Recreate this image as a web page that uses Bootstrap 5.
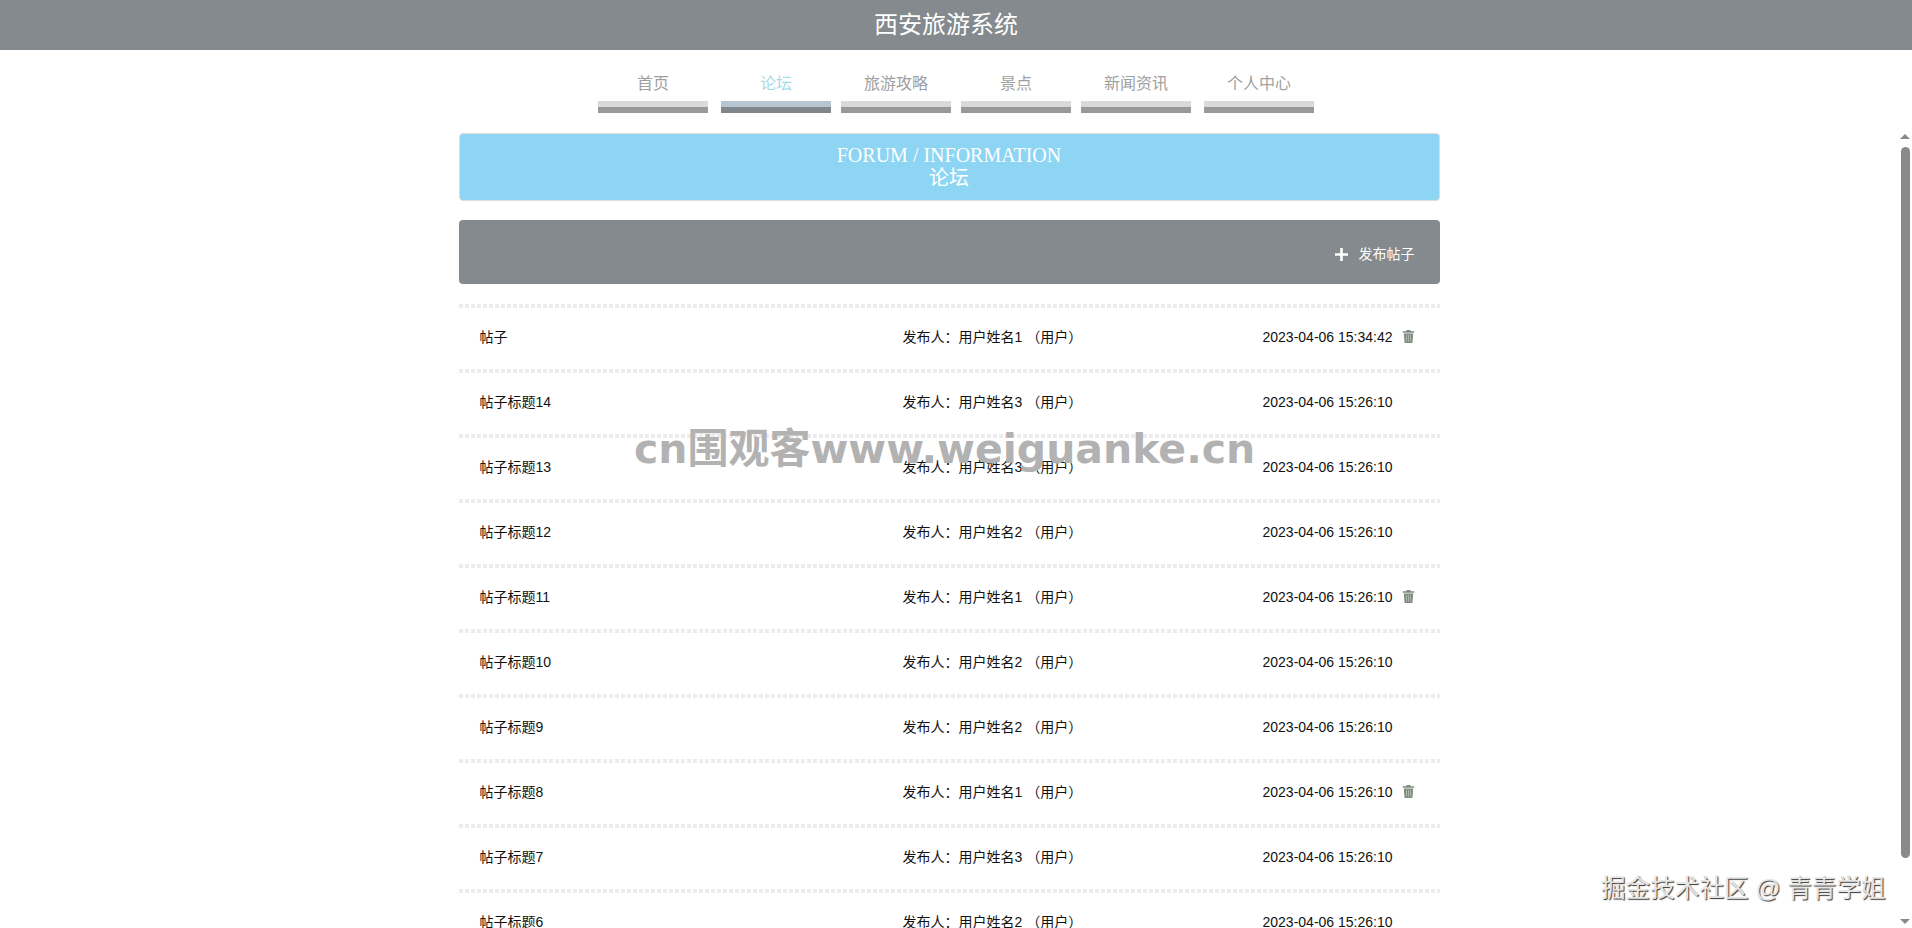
<!DOCTYPE html>
<html lang="zh-CN">
<head>
    <meta charset="UTF-8">
    <title>西安旅游系统</title>
    <link href="https://cdn.jsdelivr.net/npm/bootstrap@5.3.0/dist/css/bootstrap.min.css" rel="stylesheet">
    <style>
        html, body {
            height: 100%;
            overflow: hidden;
        }
        body {
            font-family: "Liberation Sans", "Noto Sans CJK SC", sans-serif;
            font-size: 14px;
            color: #111;
            position: relative;
        }
        .site-head {
            height: 50px;
            background: #848a8d;
            color: #fff;
            font-size: 24px;
            line-height: 50px;
            padding-right: 20px;
        }
        .site-menu {
            height: 80px;
            padding-top: 22px;
            padding-left: 0;
        }
        .site-menu a {
            display: block;
            width: 110px;
            text-align: center;
            color: #a0a0a0;
            font-size: 16px;
            line-height: 24px;
            text-decoration: none;
        }
        .site-menu a::after {
            content: "";
            display: block;
            height: 12px;
            margin-top: 5px;
            background: linear-gradient(#d9d9d9 50%, #999 50%);
        }
        .site-menu li + li { margin-left: 10px; }
        .site-menu li:nth-child(2), .site-menu li:nth-child(6) { margin-left: 13px; }
        .site-menu a.on { color: #a8dbe8; }
        .site-menu a.on::after { background: linear-gradient(#b7c6d2 50%, #80878b 50%); }
        .page-area { height: 798px; }
        .page-scroll {
            overflow: hidden;
            min-width: 0;
        }
        .fake-bar {
            width: 14px;
            padding: 0 2px 0 2px;
        }
        .fake-up, .fake-down {
            width: 0;
            height: 0;
            margin: 0 auto;
            border-left: 5px solid transparent;
            border-right: 5px solid transparent;
        }
        .fake-up {
            margin-top: 4px;
            margin-bottom: 8px;
            border-bottom: 5px solid #8a8a8a;
        }
        .fake-down {
            margin-top: auto;
            margin-bottom: 4px;
            border-top: 5px solid #8a8a8a;
        }
        .fake-thumb {
            height: 711px;
            width: 9px;
            margin: 0 auto;
            background: #8a8a8a;
            border-radius: 5px;
        }
        .forum-wrap {
            width: 981px;
            margin: 0 auto;
            padding-top: 3px;
        }
        .forum-banner {
            height: 68px;
            padding-top: 10px;
            background: #8dd5f3;
            border: 1px solid #ddd;
            border-radius: 4px;
            color: #fff;
            font-family: "Liberation Serif", "Noto Sans CJK SC", serif;
            font-size: 20px;
            line-height: 23px;
        }
        .forum-bar {
            height: 64px;
            margin-top: 19px;
            margin-bottom: 20px;
            padding: 24px 25px 0 0;
            background: #848a8d;
            border-radius: 4px;
            color: #fff;
        }
        .forum-bar svg { margin-right: 11px; }
        .post-row {
            height: 65px;
            padding: 2px 0 0 21px;
            background: repeating-linear-gradient(90deg, #ececec 0 4px, #fff 4px 6px) no-repeat top left / 100% 4px;
        }
        .post-name { width: 423px; }
        .post-user { width: 360px; }
        .post-time { width: 130px; white-space: nowrap; }
        .post-del { margin: -2px 0 0 9px; }
        .mark-site {
            position: absolute;
            left: 634px;
            top: 425px;
            color: #b2b2b2;
            font-family: "DejaVu Sans", "Noto Sans CJK SC", sans-serif;
            font-size: 41px;
            font-weight: 700;
            line-height: 48px;
            white-space: nowrap;
        }
        .mark-author {
            position: absolute;
            left: 1601px;
            top: 873px;
            color: #e6e6e6;
            font-size: 24.6px;
            line-height: 32px;
            text-shadow: 1px 1px 1px #333;
            white-space: nowrap;
        }
    </style>
</head>
<body>
    <div class="site-head text-center">西安旅游系统</div>

    <ul class="nav justify-content-center site-menu">
        <li><a href="#">首页</a></li>
        <li><a href="#" class="on">论坛</a></li>
        <li><a href="#">旅游攻略</a></li>
        <li><a href="#">景点</a></li>
        <li><a href="#">新闻资讯</a></li>
        <li><a href="#">个人中心</a></li>
    </ul>

    <div class="page-area d-flex">
        <div class="page-scroll flex-grow-1">
            <div class="forum-wrap">
                <div class="forum-banner text-center">FORUM / INFORMATION<br>论坛</div>
                <div class="forum-bar d-flex justify-content-end align-items-start">
                    <span class="d-flex align-items-center">
                        <svg width="13" height="13" viewBox="0 0 13 13"><path d="M5.2 0h2.6v5.2H13v2.6H7.8V13H5.2V7.8H0V5.2h5.2z" fill="#fff"/></svg>
                        发布帖子
                    </span>
                </div>
                <div id="postList"></div>
            </div>
        </div>
        <div class="fake-bar d-flex flex-column">
            <div class="fake-up"></div>
            <div class="fake-thumb"></div>
            <div class="fake-down"></div>
        </div>
    </div>

    <div class="mark-site">cn围观客www.weiguanke.cn</div>
    <div class="mark-author">掘金技术社区 @ 青青学姐</div>

    <script>
        const posts = [
            ["帖子", "用户姓名1", "2023-04-06 15:34:42", true],
            ["帖子标题14", "用户姓名3", "2023-04-06 15:26:10", false],
            ["帖子标题13", "用户姓名3", "2023-04-06 15:26:10", false],
            ["帖子标题12", "用户姓名2", "2023-04-06 15:26:10", false],
            ["帖子标题11", "用户姓名1", "2023-04-06 15:26:10", true],
            ["帖子标题10", "用户姓名2", "2023-04-06 15:26:10", false],
            ["帖子标题9", "用户姓名2", "2023-04-06 15:26:10", false],
            ["帖子标题8", "用户姓名1", "2023-04-06 15:26:10", true],
            ["帖子标题7", "用户姓名3", "2023-04-06 15:26:10", false],
            ["帖子标题6", "用户姓名2", "2023-04-06 15:26:10", false]
        ];
        const trash = `<svg class="post-del" width="13" height="13" viewBox="0 0 13 13"><path d="M4.7 0h3.6l.5 1.3h3.4v1.4H.8V1.3h3.4zM1.8 3.4h9.4L10.4 13H2.6z" fill="#7f8a80"/><path d="M4.5 4.8v6.8M6.5 4.8v6.8M8.5 4.8v6.8" stroke="#c2ccc0" stroke-width=".7"/></svg>`;
        let html = "";
        posts.forEach(p => {
            html += `<div class="post-row d-flex align-items-center">
                <div class="post-name">${p[0]}</div>
                <div class="post-user">发布人：${p[1]} （用户）</div>
                <div class="post-time">${p[2]}</div>
                ${p[3] ? trash : ""}
            </div>`;
        });
        document.getElementById("postList").innerHTML = html;
    </script>
</body>
</html>
